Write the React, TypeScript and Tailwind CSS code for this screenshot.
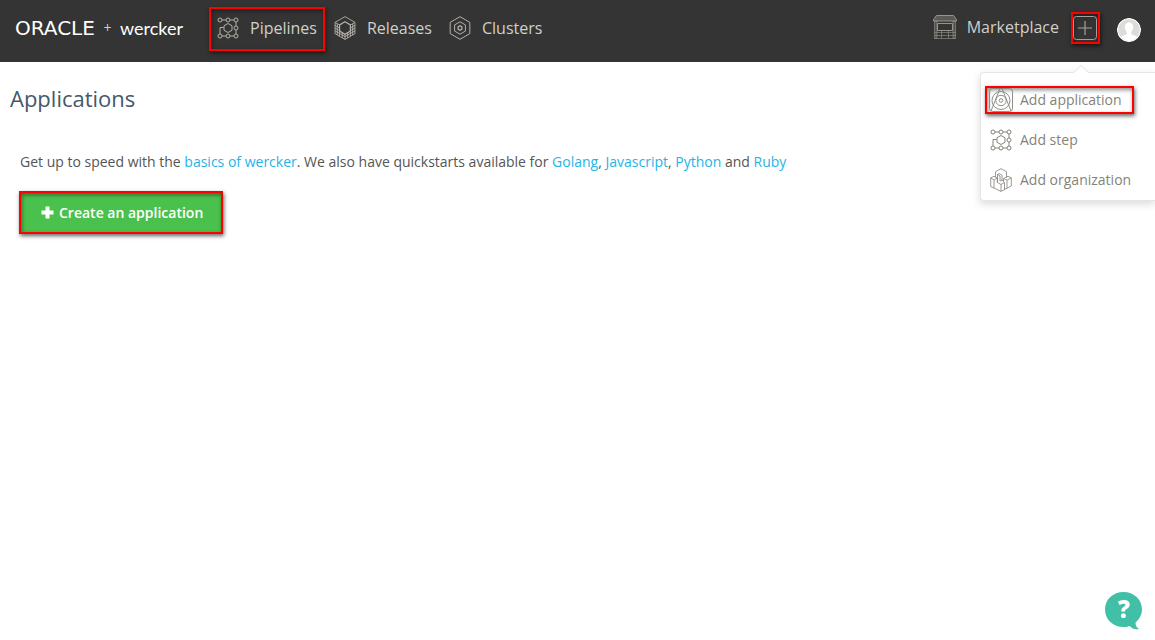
import React from "react";

type IconProps = { className?: string };

const hex = (cx: number, cy: number, r: number) => {
  const w = r * 0.87;
  return `M${cx} ${cy - r}L${cx + w} ${cy - r / 2}V${cy + r / 2}L${cx} ${cy + r}L${cx - w} ${cy + r / 2}V${cy - r / 2}Z`;
};

function StepsIcon({ className }: IconProps) {
  const dots = [[3, 3], [11, 3], [19, 3], [19, 11], [3, 19], [11, 19], [19, 19]];
  return (
    <svg viewBox="0 0 22 22" className={className} fill="none" stroke="currentColor" strokeWidth="1" aria-hidden="true">
      {dots.map(([x, y]) => (
        <circle key={`${x}-${y}`} cx={x} cy={y} r="2" />
      ))}
      <path d="M5 3H9M13 3H17M19 5V9M19 13V17M5 19H9M13 19H17M3 17V10.5H6.5" />
      <path d="M11 6.5L15 8.7V13.3L11 15.5L7 13.3V8.7Z" />
    </svg>
  );
}

function ReleasesIcon({ className }: IconProps) {
  return (
    <svg viewBox="0 0 22 24" className={className} fill="none" stroke="currentColor" strokeWidth="0.9" aria-hidden="true">
      <path d={hex(11, 12, 11.4)} />
      <path d={hex(11, 12, 6.2)} strokeWidth="1.2" />
      <path d="M1 6.4L5.6 9M21 6.4L16.4 9M3.3 7.8V19M18.7 7.8V19M5.6 15V20.3M8.3 16.5V21.8M11 18V23.3M13.7 16.5V21.8M16.4 15V20.3" />
      <path d="M1 9.3L5.6 12M1 12L5.6 14.7M1 14.8L11 20.6L21 14.8M21 9.3L16.4 12M21 12L16.4 14.7" />
    </svg>
  );
}

function ClustersIcon({ className }: IconProps) {
  return (
    <svg viewBox="0 0 22 24" className={className} fill="none" stroke="currentColor" strokeWidth="1" aria-hidden="true">
      <path d={hex(11, 12, 11.3)} />
      <path d={hex(11, 12, 6.2)} />
      <path d={hex(11, 12, 2.2)} strokeWidth="1.2" />
    </svg>
  );
}

function MarketIcon({ className }: IconProps) {
  return (
    <svg viewBox="0 0 24 24" className={className} fill="none" stroke="currentColor" strokeWidth="1" aria-hidden="true">
      <path d="M3.5 .5H20.5L23.5 4.5V6H.5V4.5Z" fill="currentColor" fillOpacity="0.4" />
      <path d="M1.5 6H4V23.5H1.5ZM20 6H22.5V23.5H20Z" fill="currentColor" fillOpacity="0.3" strokeWidth="0.6" />
      <path d="M4.500 8.5H19.500V15.5H4.500Z" />
      <path d="M1.5 17.500H22.500M1.500 20.500H22.500M1.500 23.500H22.500M8.500 16V23.500M15.500 16V23.500" strokeWidth="0.6" />
    </svg>
  );
}

function PlusBoxIcon({ className }: IconProps) {
  return (
    <svg viewBox="0 0 24 24" className={className} fill="none" stroke="currentColor" aria-hidden="true">
      <rect x=".5" y=".5" width="23" height="23" rx="3" />
      <path d="M12 5V19M5 12H19" strokeWidth="1.2" />
    </svg>
  );
}

function ApplicationIcon({ className }: IconProps) {
  return (
    <svg viewBox="0 0 24 24" className={className} fill="none" stroke="currentColor" strokeWidth="0.9" aria-hidden="true">
      <rect x=".5" y=".5" width="23" height="23" rx="3" />
      <circle cx="12" cy="12.5" r="9" />
      <circle cx="12" cy="12.5" r="5.2" />
      <circle cx="12" cy="12.5" r="1.8" />
      <path d="M11 .5L2 23M13 .5L22 23" />
    </svg>
  );
}

function OrganizationIcon({ className }: IconProps) {
  return (
    <svg viewBox="0 0 22 24" className={className} fill="none" stroke="currentColor" strokeWidth="0.8" aria-hidden="true">
      <path d="M5.5 9V3.7L11 .6L16.500 3.700V9.500" />
      <path d="M.7 10L4 8.300L7.300 10V14.500M.7 10V18.500L11 23.400L21.300 18V9.800L18 8.300L13.500 10.500" />
      <path d="M.7 10L4 12V20M4 12L7.300 10" />
      <path d="M7.500 6.500L9 5.500L12 7.200V12.500M7.500 6.500V14.500L11 16.500V23.400M7.500 6.500L10 8V13" />
      <path d="M11 16.500L14.500 14.500V21.500M10 13L12 12L14.500 14.500M13.500 10.500V13.500M13.500 10.500L17 12.200L21.300 9.800M17 12.200V20.200" />
    </svg>
  );
}

const marked =
  "border-[#fe0000] shadow-[1px_2px_4px_rgba(0,0,0,0.6),inset_1px_2px_4px_rgba(0,0,0,0.45)]";

function NavItem({ label, icon, highlight }: { label: string; icon: React.ReactNode; highlight?: boolean }) {
  return (
    <a href="#" className={`flex h-11 items-center gap-[11px] border-2 px-1.5 pb-0.5 ${highlight ? marked : "border-transparent"}`}>
      {icon}
      <span>{label}</span>
    </a>
  );
}

function MenuItem({ label, icon, highlight }: { label: string; icon: React.ReactNode; highlight?: boolean }) {
  return (
    <li className="flex">
      <a href="#" className={`flex h-7 items-center gap-[7px] border-2 pr-2.5 pl-0.5 ${highlight ? marked : "border-transparent"}`}>
        <span className="flex w-6 justify-center">{icon}</span>
        <span className="whitespace-nowrap">{label}</span>
      </a>
    </li>
  );
}

function TextLink({ children }: { children: React.ReactNode }) {
  return <a href="#" className="text-[#24b4e8]">{children}</a>;
}

export default function App() {
  return (
    <div className="flex min-h-screen flex-col bg-white font-['Open_Sans','Noto_Sans',sans-serif] text-[#555]">
      <header className="flex h-[62px] items-start justify-between bg-[#333433] pl-[15px] text-base text-[#d0cfca]">
        <div className="flex items-start gap-[26px]">
          <a href="#" className="flex h-14 w-[168px] items-center justify-between text-white">
            <span className="font-['DejaVu_Sans',sans-serif] text-xl">ORACLE</span>
            <span className="text-sm text-[#d0cfca]">+</span>
            <span className="font-['Lato',sans-serif] text-lg">wercker</span>
          </a>
          <nav className="flex gap-px pt-[7px]">
            <NavItem highlight label="Pipelines" icon={<StepsIcon className="h-[22px] w-[22px] text-[#b5b1aa]" />} />
            <NavItem label="Releases" icon={<ReleasesIcon className="h-6 w-[22px] text-[#b5b1aa]" />} />
            <NavItem label="Clusters" icon={<ClustersIcon className="h-6 w-[22px] text-[#b5b1aa]" />} />
          </nav>
        </div>
        <div className="flex h-14 items-center pr-3.5">
          <a href="#" className="flex items-center gap-2.5 pb-0.5">
            <MarketIcon className="h-6 w-6 text-[#98948c]" />
            <span>Marketplace</span>
          </a>
          <div className="relative ml-3">
            <button type="button" aria-label="Add" aria-expanded="true" className={`flex h-8 w-[29px] items-center justify-center border-2 pr-px ${marked}`}>
              <PlusBoxIcon className="h-6 w-6 shrink-0 text-[#a5a199]" />
            </button>
            <div className="absolute top-[60px] -right-[55px] w-[175px] rounded-l-sm border border-r-0 border-[#e6e6e6] bg-white text-sm text-[#85827a] shadow-[0_3px_8px_rgba(0,0,0,0.15)]">
              <svg viewBox="0 0 16 9" className="absolute -top-2 left-[92px] h-[9px] w-4" aria-hidden="true">
                <path d="M0 8.5L8 .5L16 8.5V9H0Z" fill="#fff" />
                <path d="M0 8L8 .5L16 8" fill="none" stroke="#e2e2e2" />
              </svg>
              <ul className="flex flex-col gap-3 pt-[13px] pb-1.5 pl-1">
                <MenuItem highlight label="Add application" icon={<ApplicationIcon className="h-6 w-6" />} />
                <MenuItem label="Add step" icon={<StepsIcon className="h-[22px] w-[22px]" />} />
                <MenuItem label="Add organization" icon={<OrganizationIcon className="h-6 w-[22px]" />} />
              </ul>
            </div>
          </div>
          <button type="button" aria-label="Account" className="mt-1 ml-[17px] h-6 w-6 overflow-hidden rounded-full">
            <svg viewBox="0 0 24 24" className="h-6 w-6" aria-hidden="true">
              <circle cx="12" cy="12" r="11.4" fill="#dddcd9" stroke="#fff" strokeWidth="1.2" />
              <path d="M12 4.5C15 4.5 16.3 6.7 16.2 9.3C16.1 11.5 15.2 12.8 14.3 14V16C15.5 17.2 18 17.3 20 18.8C18 22 15 23 12 23C9 23 6 22 4 18.8C6 17.3 8.5 17.2 9.7 16V14C8.8 12.8 7.9 11.5 7.8 9.3C7.7 6.7 9 4.5 12 4.5Z" fill="#fff" />
            </svg>
          </button>
        </div>
      </header>

      <main className="flex flex-1 flex-col items-start px-2.5 pt-5">
        <h1 className="text-[22px] leading-8 text-[#45586a]">Applications</h1>
        <p className="mt-9 ml-2.5 text-sm leading-6">
          Get up to speed with the <TextLink>basics of wercker</TextLink>. We also have quickstarts available for{" "}
          <TextLink>Golang</TextLink>, <TextLink>Javascript</TextLink>, <TextLink>Python</TextLink> and <TextLink>Ruby</TextLink>
        </p>
        <button type="button" className={`mt-[17px] ml-[9px] flex h-[43px] items-center gap-[5px] border-2 bg-[#4bc14d] pr-[18px] pl-5 text-sm font-semibold text-white ${marked}`}>
          <svg viewBox="0 0 13 13" className="h-[13px] w-[13px]" aria-hidden="true">
            <path d="M4.5 .5H8.5V4.5H12.5V8.5H8.5V12.5H4.5V8.5H.5V4.5H4.5Z" fill="currentColor" />
          </svg>
          Create an application
        </button>
      </main>

      <button type="button" aria-label="Help" className="fixed right-3 bottom-2.5 flex h-[38px] w-[38px] items-start justify-center text-white">
        <svg viewBox="0 0 38 38" className="absolute inset-0 h-full w-full" aria-hidden="true">
          <path d="M18.500 0C29 0 37 7.500 37 17.500C37 22.500 34.500 27 30.500 30.500C30.500 33.500 31.500 35.500 34 37C30 38 27 36.500 24.500 34C22 35 20.500 35 18.500 35C8 35 0 27.500 0 17.500C0 7.500 8 0 18.500 0Z" fill="#41c0a7" />
        </svg>
        <span className="relative text-2xl leading-[34px] font-extrabold">?</span>
      </button>
    </div>
  );
}
